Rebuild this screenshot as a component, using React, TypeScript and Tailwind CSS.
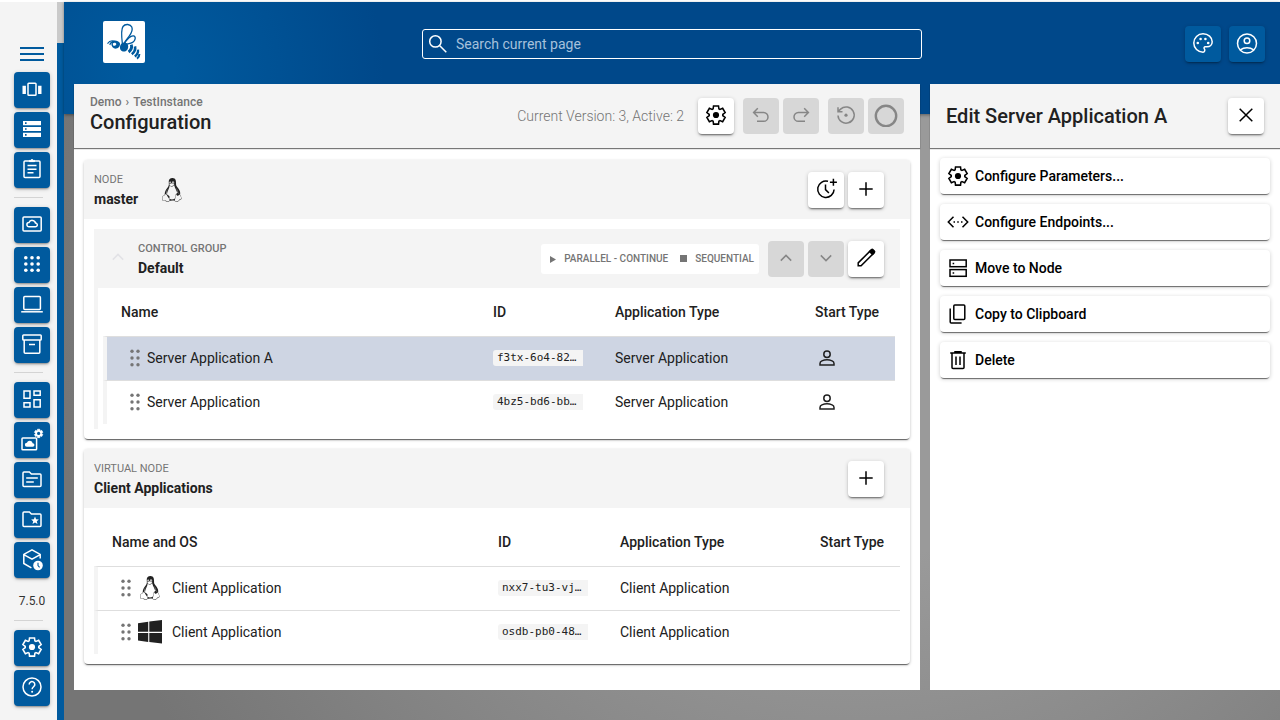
import type { ReactNode } from "react";
import clsx from "clsx";
import { SiLinux } from "react-icons/si";

const GEAR =
  "m9.25 22-.4-3.2q-.325-.125-.612-.3t-.563-.375L4.7 19.375l-2.75-4.75 2.575-1.95Q4.5 12.5 4.5 12.338v-.675q0-.163.025-.338L1.95 9.375l2.75-4.75 2.975 1.25q.275-.2.575-.375t.6-.3l.4-3.2h5.5l.4 3.2q.325.125.613.3t.562.375l2.975-1.25 2.75 4.75-2.575 1.95q.025.175.025.338v.674q0 .163-.05.338l2.575 1.95-2.75 4.75-2.95-1.25q-.275.2-.575.375t-.6.3l-.4 3.2z";

const FOLDER = "M3 18.4V6c0-.6.4-1 1-1h5.4l2 2H20c.6 0 1 .4 1 1v10.4c0 .6-.4 1-1 1H4c-.6 0-1-.4-1-1z";

const icons = {
  carousel: (
    <>
      <rect x="8" y="6.2" width="8" height="12" rx="0.8" />
      <path d="M4.2 8.7v8.200M19.8 8.700v8.200" strokeWidth="3.4" />
    </>
  ),
  storage: (
    <path
      d="M3 4h18v4.2H3zM5 5.3v1.6h1.6V5.3zM3 9.9h18v4.2H3zM5 11.2v1.6h1.6v-1.6zM3 15.8h18V20H3zM5 17.1v1.6h1.6v-1.6z"
      fill="currentColor"
      fillRule="evenodd"
      stroke="none"
    />
  ),
  assignment: (
    <>
      <rect x="4" y="4" width="16" height="16.5" rx="1" />
      <path d="M7.5 8.6h9M7.5 12.2h9M7.5 15.8h6" />
      <path d="M9.5 4.6V3.4h1.2a1.4 1.4 0 0 1 2.6 0h1.2v1.2z" fill="currentColor" strokeWidth="1" />
    </>
  ),
  cloudScreen: (
    <>
      <rect x="3" y="5" width="18.2" height="14" rx="1" />
      <path d="M9 14.8h6.3a1.9 1.9 0 0 0 .2-3.8 3.4 3.4 0 0 0-6.5-.4 2.1 2.1 0 0 0 0 4.2z" />
    </>
  ),
  apps: (
    <g fill="currentColor" stroke="none">
      {[5.8, 12, 18.2].map((y) =>
        [5.8, 12, 18.2].map((x) => <circle key={`${x}-${y}`} cx={x} cy={y} r="1.8" />)
      )}
    </g>
  ),
  laptop: (
    <>
      <rect x="3.8" y="4.6" width="16.6" height="13" rx="1" />
      <path d="M1.2 19.8h21.6" />
    </>
  ),
  archive: (
    <>
      <rect x="2.8" y="3" width="18.4" height="5" rx="0.8" />
      <path d="M4.2 8v12.2c0 .6.4 1 1 1h13.6c.6 0 1-.4 1-1V8M9 12.6h6" />
    </>
  ),
  dashboard: <path d="M4 4h6v7.2H4zM14 4h6.2v4.2H14zM4 15.8h6V20H4zM14 12.8h6.2V20H14z" />,
  cloudSettings: (
    <>
      <rect x="2" y="11" width="14.6" height="11.8" rx="0.8" />
      <path
        d="M6.8 19.8h5.8a1.8 1.8 0 0 0 .1-3.6 3 3 0 0 0-5.8-.4 2 2 0 0 0-.1 4z"
        fill="currentColor"
        stroke="none"
      />
      <g transform="translate(13.6 1.4) scale(.42)">
        <path d={GEAR} fill="currentColor" />
        <circle cx="12" cy="12" r="3.8" fill="#005a9e" stroke="none" />
      </g>
    </>
  ),
  folderText: (
    <>
      <path d={FOLDER} />
      <path d="M6.2 11h11.6M6.2 15h7.6" />
    </>
  ),
  folderStar: (
    <>
      <path d={FOLDER} />
      <path
        d="m15 9.600 1.100 2.600 2.800.2-2.100 1.900.7 2.700-2.500-1.500-2.500 1.500.7-2.700-2.100-1.900 2.800-.2z"
        fill="currentColor"
        stroke="none"
      />
    </>
  ),
  packageClock: (
    <>
      <path d="M11.4 20.8 3.8 16.5V7.4L12 2.8l8.2 4.6v4M3.8 7.6 12 12.2l8.2-4.6" />
      <circle cx="18" cy="18.5" r="4.8" fill="currentColor" stroke="none" />
      <path d="M18 15.7v2.800l1.600 1.800" stroke="#005a9e" strokeWidth="1.1" />
    </>
  ),
  gear: (
    <>
      <path d={GEAR} transform="translate(1.1 1.1) scale(.91)" strokeWidth="1.7" />
      <circle cx="12" cy="12" r="3.1" fill="currentColor" stroke="none" />
    </>
  ),
  help: (
    <>
      <circle cx="12" cy="12" r="9" />
      <path d="M9.2 9.4a2.8 2.8 0 1 1 4.6 2.1c-1 .9-1.7 1.4-1.7 2.7" />
      <circle cx="12.1" cy="16.8" r="1" fill="currentColor" stroke="none" />
    </>
  ),
  search: (
    <>
      <circle cx="9.4" cy="9.4" r="5.7" />
      <path d="m13.5 13.5 6.8 6.8" />
    </>
  ),
  palette: (
    <>
      <path d="M12 21.2a9.2 9.2 0 1 1 0-18.4c5.2 0 9.2 3.5 9.2 8 0 3-2.3 5-5.2 5h-1.7c-1.2 0-1.7 1.2-.9 2.1.9 1.2.2 3.3-1.4 3.3z" />
      <g fill="currentColor" stroke="none">
        <circle cx="6.8" cy="12" r="1.3" />
        <circle cx="9.6" cy="8" r="1.3" />
        <circle cx="14.4" cy="8" r="1.3" />
        <circle cx="17.2" cy="12" r="1.3" />
      </g>
    </>
  ),
  account: (
    <>
      <circle cx="12" cy="12.500" r="9.5" />
      <circle cx="12" cy="9.8" r="2.8" />
      <path d="M5.3 18.9c3.900-3 9.500-3 13.400 0" />
    </>
  ),
  close: <path d="m5.7 5.7 12.6 12.6M18.3 5.700 5.700 18.300" />,
  undo: <path d="M8 18.3h6.600a4.400 4.400 0 0 0 0-8.800H4.800M8.800 5.300 4.600 9.500l4.200 4.200" />,
  redo: <path d="M16 18.3H9.400a4.400 4.400 0 0 1 0-8.800h9.800M15.200 5.300l4.200 4.200-4.200 4.200" />,
  restore: (
    <>
      <path d="M4 12.5a8.100 8.100 0 1 0 2.600-6.400L4 8.600M4 4.200v4.500h4.500" />
      <circle cx="12" cy="12.2" r="1.6" fill="currentColor" stroke="none" />
    </>
  ),
  ring: <circle cx="12" cy="13" r="10.2" strokeWidth="2.4" />,
  clockPlus: <path d="M14 4.300a8.200 8.200 0 1 0 6.100 8.200M11.500 7.600v5l3.400 3.500M19.400 1.800v7M15.900 5.300h7" />,
  plus: <path d="M12 5.300v13.400M5.300 12h13.400" />,
  up: <path d="m6.800 14.600 5.200-5.200 5.200 5.200" />,
  down: <path d="m6.800 9.400 5.200 5.200 5.200-5.200" />,
  pencil: (
    <>
      <path d="M4.2 19.800v-2.900L16.500 4.600l2.900 2.900L7.100 19.800z" />
      <path
        d="m15.600 5.500 1.800-1.800c.5-.5 1.100-.5 1.600 0l1.300 1.300c.5.5.5 1.100 0 1.600l-1.800 1.800z"
        fill="currentColor"
      />
    </>
  ),
  person: (
    <>
      <circle cx="12" cy="8.3" r="3.2" />
      <path d="M5 19v-1.600c0-1.300.7-2 1.900-2.500 3.300-1.400 6.900-1.400 10.200 0 1.200.5 1.900 1.200 1.900 2.500V19z" />
    </>
  ),
  drag: (
    <g fill="currentColor" stroke="none">
      {[5.2, 12, 18.8].map((y) =>
        [9, 15].map((x) => <circle key={`${x}-${y}`} cx={x} cy={y} r="1.7" />)
      )}
    </g>
  ),
  endpoints: (
    <>
      <path d="m7.5 6.800-5.200 5.200 5.200 5.200M16.500 6.800l5.200 5.200-5.200 5.200" />
      <path d="M7.5 12H9M11.250 12h1.500M15 12h1.500" />
    </>
  ),
  dns: (
    <>
      <rect x="4" y="4" width="16.2" height="6.7" />
      <rect x="4" y="13.6" width="16.2" height="6.7" />
      <path d="M6.6 7.400h1.600M6.600 17h1.600" />
    </>
  ),
  copy: (
    <>
      <rect x="7.8" y="2.9" width="11" height="14.6" rx="1" />
      <path d="M4.2 6.400v13.700c0 .6.4 1 1 1h10.400" />
    </>
  ),
  trash: (
    <path d="M4.2 5h15.600M9 5V3.700h6V5M6 5v14.400c0 .6.4 1 1 1h10c.6 0 1-.4 1-1V5M10 8.400V17M14 8.400V17" />
  ),
  windows: (
    <path
      d="M0 3.200 10.200 1.800v10H0zM11.300 1.600 24 0v11.800H11.300zM0 12.900h10.200v9L0 20.400zM11.300 12.900H24v10.700l-12.700-1.700z"
      fill="currentColor"
      stroke="none"
    />
  ),
};

type IconName = keyof typeof icons;

const Icon = ({ name, className = "size-6" }: { name: IconName; className?: string }) => (
  <svg
    viewBox="0 0 24 24"
    className={clsx("shrink-0", className)}
    fill="none"
    stroke="currentColor"
    strokeWidth="1.5"
    aria-hidden="true"
  >
    {icons[name]}
  </svg>
);

const BeeLogo = () => (
  <svg
    viewBox="0 0 42 42"
    className="size-[42px] rounded-[2px] bg-white text-[#005a9e]"
    fill="none"
    stroke="currentColor"
  >
    <path
      d="M19.4 23C18.400 15 18.200 8 20 5.500c2.200-3 7.500-2.500 8.800.6 1.200 3-.3 6-2.600 9-2 2.600-4 4.800-5.400 7.600"
      strokeWidth="1.3"
    />
    <path d="M21.5 22.500c2.500-4.300 6.500-8.300 9.200-7.600 2.600 1 1.600 5-1 6.500-2 1.200-4.500 1.400-6.700 2" strokeWidth="1.3" />
    <path d="M11.500 20.200c-2.800-.9-5.300-.2-7 2.400M10.500 21.200c-2-.3-3.200.7-3.700 2.800" strokeWidth="1.100" />
    <path d="M8.800 20.500c2.300-1.600 6.700-1 8 1.600.8 2.300-.8 5-3.500 5.500-3 .3-4.900-1.800-4.900-4.500z" fill="currentColor" stroke="none" />
    <path d="M9.800 22.400c1.300-1.300 3.700-.6 3.500.9-.2 1.400-2.200 2-3.300 1z" fill="white" stroke="none" />
    <path d="M17 25.800c.2-2.900 2.800-4.800 5.800-4 2.200.7 2.900 3.200 2.200 5.400-.8 2.400-2.900 3.800-5.200 3.300-2.200-.4-3.100-2.500-2.800-4.700z" fill="currentColor" stroke="none" />
    <path d="M28.300 23.700Q29.600 28 25.600 31" strokeWidth="2.900" />
    <path d="M32 25.400Q33 30 28.800 33.200" strokeWidth="2.600" />
    <path d="M35 28.700Q35.600 32.600 31.800 35.500" strokeWidth="2.300" />
    <path d="M36.400 33Q36.500 35.800 34 37.600" strokeWidth="2" />
  </svg>
);

const buttonTones = {
  blue: "bg-[#005a9e] text-white shadow-[0_2px_2px_-1px_#00000055,0_1px_4px_#00000033]",
  white: "bg-white text-black shadow-[0_2px_2px_-1px_#00000088,0_1px_4px_#00000033]",
  disabled: "bg-[#d7d7d7] text-[#868686]",
};

const IconButton = ({
  icon,
  label,
  tone = "white",
}: {
  icon: IconName;
  label: string;
  tone?: keyof typeof buttonTones;
}) => (
  <button
    type="button"
    aria-label={label}
    disabled={tone === "disabled"}
    className={clsx("flex size-9 shrink-0 items-center justify-center rounded pb-0.5", buttonTones[tone])}
  >
    <Icon name={icon} />
  </button>
);

const menuGroups: { icon: IconName; label: string }[][] = [
  [
    { icon: "carousel", label: "Instance Groups" },
    { icon: "storage", label: "Instances" },
    { icon: "assignment", label: "Reports" },
  ],
  [
    { icon: "cloudScreen", label: "Dashboard" },
    { icon: "apps", label: "Processes" },
    { icon: "laptop", label: "Client Applications" },
    { icon: "archive", label: "Software Repositories" },
  ],
  [
    { icon: "dashboard", label: "Overview" },
    { icon: "cloudSettings", label: "Configuration" },
    { icon: "folderText", label: "Data Files" },
    { icon: "folderStar", label: "Configuration Files" },
    { icon: "packageClock", label: "History" },
  ],
];

const Divider = () => <hr className="my-[9px] w-[29px] border-[#d4d4d4]" />;

const Sidebar = () => (
  <nav className="w-[57px] shrink-0 bg-[#f4f4f4] pl-3.5 pt-10">
    <button type="button" aria-label="Menu" className="mb-1.5 flex h-6 w-9 items-center justify-center text-[#005a9e]">
      <svg viewBox="0 0 24 16" className="h-4 w-6" stroke="currentColor" strokeWidth="2">
        <path d="M0 2h24M0 8h24M0 14h24" />
      </svg>
    </button>
    {menuGroups.map((group, index) => (
      <div key={index}>
        {index > 0 && <Divider />}
        <div className="space-y-1">
          {group.map((item) => (
            <IconButton key={item.label} icon={item.icon} label={item.label} tone="blue" />
          ))}
        </div>
      </div>
    ))}
    <p className="mt-[13px] w-9 text-center text-xs leading-5 text-[#333]">7.5.0</p>
    <Divider />
    <div className="space-y-1">
      <IconButton icon="gear" label="Settings" tone="blue" />
      <IconButton icon="help" label="Help" tone="blue" />
    </div>
  </nav>
);

const TopBar = () => (
  <header className="grid h-28 grid-cols-[1fr_500px_1fr] items-center bg-[radial-gradient(circle_at_90px_70px,#005a9e_20px,#00488a_230px)] pb-7 shadow-[0_1px_3px_#00000066]">
    <div className="pb-1 pl-[39px]">
      <BeeLogo />
    </div>
    <label className="flex h-[30px] items-center gap-1.5 rounded-[3px] border border-white pl-[3px] text-white">
      <Icon name="search" />
      <input
        type="text"
        aria-label="Search current page"
        placeholder="Search current page"
        className="w-full bg-transparent text-sm outline-none placeholder:text-[#a6c1dc]"
      />
    </label>
    <div className="flex justify-end gap-2 pr-[15px]">
      <IconButton icon="palette" label="Theme" tone="blue" />
      <IconButton icon="account" label="Account" tone="blue" />
    </div>
  </header>
);

const panelHeader = "flex h-16 items-center bg-[#f4f4f4] px-4 shadow-[0_1px_1px_#00000088]";

const Heading = ({ overline, title, strong }: { overline: string; title: string; strong?: boolean }) => (
  <div>
    <p className={clsx("text-[11px] leading-[18px] text-[#757575] uppercase", strong && "font-medium")}>{overline}</p>
    <h2 className="text-sm leading-5 font-bold">{title}</h2>
  </div>
);

const Card = ({ header, children }: { header: ReactNode; children: ReactNode }) => (
  <section className="rounded-sm bg-white shadow-[0_2px_1px_-1px_#00000088,0_1px_3px_#00000044]">
    <div className="flex h-[59px] items-center rounded-t-sm bg-[#f4f4f4] pr-[26px] pl-2.5">{header}</div>
    <div className="p-2.5">{children}</div>
  </section>
);

type Row = {
  name: string;
  id: string;
  type: string;
  os?: "linux" | "windows";
  manual?: boolean;
  selected?: boolean;
};

const serverApps: Row[] = [
  { name: "Server Application A", id: "f3tx-6o4-82…", type: "Server Application", manual: true, selected: true },
  { name: "Server Application", id: "4bz5-bd6-bb…", type: "Server Application", manual: true },
];

const clientApps: Row[] = [
  { name: "Client Application", id: "nxx7-tu3-vj…", type: "Client Application", os: "linux" },
  { name: "Client Application", id: "osdb-pb0-48…", type: "Client Application", os: "windows" },
];

const AppTable = ({ nameLabel, rows }: { nameLabel: string; rows: Row[] }) => (
  <table className="w-full table-fixed border-separate border-spacing-0 text-left text-sm">
    <thead>
      <tr className="h-12">
        <th className="pl-[18px] font-medium">{nameLabel}</th>
        <th className="w-[122px] font-medium">ID</th>
        <th className="w-[200px] font-medium">Application Type</th>
        <th className="w-20 font-medium">Start Type</th>
      </tr>
    </thead>
    <tbody>
      {rows.map((row) => (
        <tr
          key={row.id}
          className={clsx(
            "h-11 [&>td]:border-t [&>td]:border-t-[#dedede] [&>td]:pb-0.5",
            row.selected && "bg-[#ced5e3]"
          )}
        >
          <td className="border-l-4 border-l-[#f4f4f4] pl-4">
            <div className="flex items-center">
              <Icon name="drag" className="size-6 text-[#757575]" />
              {row.os === "linux" && <SiLinux className="mr-2.5 size-6" />}
              {row.os === "windows" && <Icon name="windows" className="mr-2.5 size-6" />}
              {row.name}
            </div>
          </td>
          <td>
            <code className="block h-4 w-[90px] rounded-l-[3px] bg-[#f4f4f4] pl-1 font-['DejaVu_Sans_Mono',monospace] text-[11px] leading-4">
              {row.id}
            </code>
          </td>
          <td>{row.type}</td>
          <td>{row.manual && <Icon name="person" />}</td>
        </tr>
      ))}
    </tbody>
  </table>
);

const ControlGroup = () => (
  <div>
    <div className="flex h-[59px] items-center bg-[#f4f4f4] pr-4 pl-3">
      <button type="button" aria-label="Collapse" className="mr-2 pb-1 text-[#e2e2e6]">
        <Icon name="up" />
      </button>
      <Heading overline="Control Group" title="Default" strong />
      <div className="mr-[9px] ml-auto flex h-[30px] items-center gap-2 rounded-[3px] bg-white px-[5px] text-[10px] font-medium text-[#757575]">
        <svg viewBox="0 0 6 8" className="ml-1 h-2 w-1.5" fill="currentColor">
          <path d="M0 1v7l6-3.5z" />
        </svg>
        <span>PARALLEL - CONTINUE</span>
        <span className="ml-1 size-[7px] bg-[#757575]" />
        <span>SEQUENTIAL</span>
      </div>
      <div className="flex gap-1">
        <IconButton icon="up" label="Move up" tone="disabled" />
        <IconButton icon="down" label="Move down" tone="disabled" />
        <IconButton icon="pencil" label="Edit group" />
      </div>
    </div>
    <div className="border-l-4 border-[#f4f4f4] pr-[5px] pb-[5px] pl-[5px]">
      <AppTable nameLabel="Name" rows={serverApps} />
    </div>
  </div>
);

const Configuration = () => (
  <main className="min-w-0 flex-1 bg-white">
    <div className={panelHeader}>
      <div className="pb-1">
        <div className="flex gap-1 text-xs leading-4 font-medium text-[#757575]">
          <a href="#demo">Demo</a>
          <span>›</span>
          <a href="#instance">TestInstance</a>
        </div>
        <h1 className="text-xl leading-6 font-medium">Configuration</h1>
      </div>
      <p className="mr-3.5 ml-auto text-sm font-light text-[#757575]">Current Version: 3, Active: 2</p>
      <IconButton icon="gear" label="Instance settings" />
      <div className="mx-[9px] flex gap-1">
        <IconButton icon="undo" label="Undo" tone="disabled" />
        <IconButton icon="redo" label="Redo" tone="disabled" />
      </div>
      <div className="flex gap-1">
        <IconButton icon="restore" label="Discard changes" tone="disabled" />
        <IconButton icon="ring" label="Save" tone="disabled" />
      </div>
    </div>
    <div className="space-y-2.5 px-2.5 pt-3 pb-6">
      <Card
        header={
          <>
            <Heading overline="Node" title="master" />
            <SiLinux className="mr-auto ml-5.5 size-6" />
            <div className="flex gap-1">
              <IconButton icon="clockPlus" label="Add control group" />
              <IconButton icon="plus" label="Add application" />
            </div>
          </>
        }
      >
        <ControlGroup />
      </Card>
      <Card
        header={
          <>
            <Heading overline="Virtual Node" title="Client Applications" />
            <div className="ml-auto">
              <IconButton icon="plus" label="Add client application" />
            </div>
          </>
        }
      >
        <AppTable nameLabel="Name and OS" rows={clientApps} />
      </Card>
    </div>
  </main>
);

const actions: { icon: IconName; label: string }[] = [
  { icon: "gear", label: "Configure Parameters..." },
  { icon: "endpoints", label: "Configure Endpoints..." },
  { icon: "dns", label: "Move to Node" },
  { icon: "copy", label: "Copy to Clipboard" },
  { icon: "trash", label: "Delete" },
];

const EditPanel = () => (
  <aside className="w-[350px] shrink-0 bg-white">
    <div className={clsx(panelHeader, "justify-between")}>
      <h2 className="text-xl font-medium">Edit Server Application A</h2>
      <IconButton icon="close" label="Close" />
    </div>
    <div className="space-y-2.5 p-2.5">
      {actions.map((action) => (
        <button
          key={action.label}
          type="button"
          className="flex h-9 w-full items-center gap-[5px] rounded bg-white pl-1.5 text-sm font-medium text-black shadow-[0_2px_1px_-1px_#00000088,0_1px_4px_#00000033]"
        >
          <Icon name={action.icon} />
          {action.label}
        </button>
      ))}
    </div>
  </aside>
);

export default function App() {
  return (
    <div className="flex min-h-screen bg-white pt-0.5 font-[Roboto,sans-serif] text-[#212121]">
      <Sidebar />
      <div className="w-[7px] shrink-0 border-t-[41px] border-[#cacaca] bg-[#005a9e]" />
      <div className="flex min-w-0 flex-1 flex-col bg-[radial-gradient(circle_at_65%_40%,#9a9a9a_30%,#757575_90%)]">
        <TopBar />
        <div className="-mt-[30px] mb-[30px] ml-2.5 flex flex-1 gap-2.5">
          <Configuration />
          <EditPanel />
        </div>
      </div>
    </div>
  );
}
